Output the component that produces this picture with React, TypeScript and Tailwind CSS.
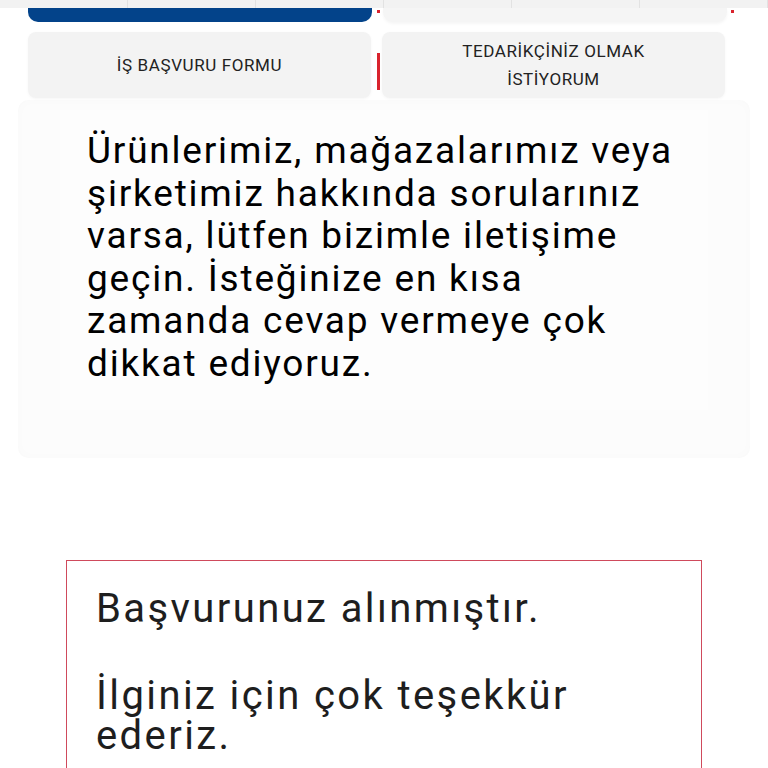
export default function App() {
  return (
    <div className="relative h-[768px] w-[768px] overflow-hidden bg-white font-['Roboto',sans-serif] text-black">
      {/* top tab strip */}
      <div className="flex h-[8px] w-full bg-[#f2f2f2]">
        {[0, 1, 2, 3, 4, 5].map((i) => (
          <div key={i} className="h-full w-[128px] shrink-0 border-r border-[#e2e2e2]" />
        ))}
      </div>

      <div className="grid grid-cols-2 gap-[11px] pl-[28px] pr-[41px]">
        <div className="h-[14px] rounded-b-[10px] bg-[#03438a]" />
        <div className="h-[14px] rounded-b-[10px] bg-[#f5f5f5] shadow-[0_2px_3px_rgba(0,0,0,0.04)]" />
      </div>

      {/* red markers */}
      <div className="absolute left-[377px] top-[10px] h-[3px] w-[3px] bg-[#d9232d]" />
      <div className="absolute left-[731px] top-[10px] h-[3px] w-[3px] bg-[#d9232d]" />

      <div className="mt-[10px] grid grid-cols-2 gap-[11px] pl-[28px] pr-[43px]">
        <button className="flex h-[66px] items-center justify-center rounded-[8px] bg-[#f3f3f3] text-[17px] leading-[28px] tracking-[0.6px] text-[#222] shadow-[0_1px_3px_rgba(0,0,0,0.04)]">
          İŞ BAŞVURU FORMU
        </button>
        <button className="flex h-[66px] items-center justify-center rounded-[8px] bg-[#f3f3f3] text-center text-[17px] leading-[28px] tracking-[0.6px] text-[#222] shadow-[0_1px_3px_rgba(0,0,0,0.04)]">
          TEDARİKÇİNİZ OLMAK
          <br />
          İSTİYORUM
        </button>
      </div>
      <div className="absolute left-[377px] top-[53px] h-[37px] w-[3px] bg-[#d9232d]" />

      {/* info panel */}
      <div className="mx-[18px] mt-[2px] h-[358px] rounded-[10px] bg-[#fcfcfc] px-[42px] pt-[10px] shadow-[inset_0_0_12px_rgba(0,0,0,0.015)]">
        <div className="h-[300px] bg-[#fdfdfd] px-[27px] pt-[20px]">
          <p className="whitespace-nowrap text-[37px] leading-[42.6px] tracking-[1.8px]">
            Ürünlerimiz, mağazalarımız veya
            <br />
            şirketimiz hakkında sorularınız
            <br />
            varsa, lütfen bizimle iletişime
            <br />
            geçin. İsteğinize en kısa
            <br />
            zamanda cevap vermeye çok
            <br />
            dikkat ediyoruz.
          </p>
        </div>
      </div>

      {/* confirmation box */}
      <div className="mx-[66px] mt-[102px] h-[300px] border border-[#cf4a5c] px-[29px] pt-[24px]">
        <p className="text-[40px] leading-[48px] tracking-[2.4px] text-[#1e1e1e]">Başvurunuz alınmıştır.</p>
        <p className="mt-[43px] whitespace-nowrap text-[40px] leading-[40px] tracking-[2.4px] text-[#1e1e1e]">
          İlginiz için çok teşekkür
          <br />
          ederiz.
        </p>
      </div>
    </div>
  );
}
